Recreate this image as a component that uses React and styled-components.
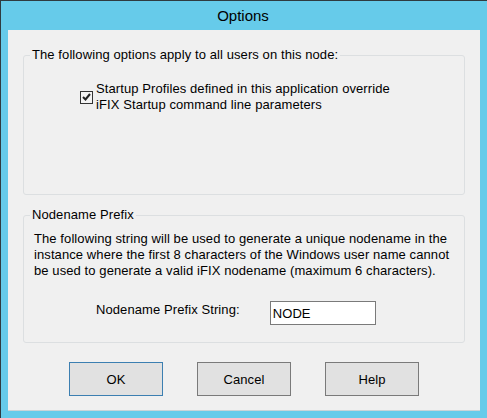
import React from 'react'
import styled, { createGlobalStyle } from 'styled-components'

const GlobalStyle = createGlobalStyle`
  html, body {
    margin: 0;
    padding: 0;
    background: #66cbea;
  }
  body {
    font-family: "Liberation Sans", Arial, sans-serif;
    font-size: 13px;
    letter-spacing: 0.09px;
    color: #000;
  }
`

const Frame = styled.div`
  width: 487px;
  height: 418px;
  box-sizing: border-box;
  background: #66cbea;
  border-left: 1px solid #2f3b40;
  border-top: 1px solid #2f3b40;
  padding: 0 7px 8px 7px;
  display: flex;
  flex-direction: column;
`

const TitleBar = styled.div`
  height: 29px;
  display: flex;
  align-items: center;
  justify-content: center;
  font-size: 15px;
  letter-spacing: 0;
  color: #000;
  padding-right: 2px;
`

const Client = styled.div`
  flex: 1;
  background: #f0f0f0;
  padding: 17px 15px 0 15px;
  display: flex;
  flex-direction: column;
  box-shadow: 0 1px 0 #c9d3d7;
`

const Group = styled.fieldset`
  margin: 0;
  padding: 0;
  min-width: 0;
  border: 1px solid #dcdfe1;
  border-radius: 3px;
  margin-top: ${({ $gap }) => $gap || 0}px;
`

const Legend = styled.legend`
  margin-left: 6px;
  padding: 0 2px;
  line-height: 16px;
`

const GroupBody = styled.div`
  box-sizing: border-box;
  height: ${({ $height }) => $height}px;
  padding: ${({ $pad }) => $pad};
`

const CheckRow = styled.label`
  display: flex;
  align-items: center;
  gap: 3px;
  line-height: 16px;
`

const CheckBox = styled.span`
  width: 13px;
  height: 13px;
  box-sizing: border-box;
  border: 1px solid #333;
  background: #f4f4f4;
  display: flex;
  align-items: center;
  justify-content: center;
  flex: none;
`

const Paragraph = styled.p`
  margin: 0;
  line-height: 16px;
`

const PrefixRow = styled.div`
  display: flex;
  align-items: center;
  margin: 22px 0 0 62px;
  gap: 30px;
`

const PrefixLabel = styled.span`
  line-height: 16px;
  position: relative;
  top: -3px;
`

const TextField = styled.div`
  width: 106px;
  height: 24px;
  box-sizing: border-box;
  border: 1px solid #7a7a7a;
  background: #fff;
  padding: 0 2px;
  display: flex;
  align-items: center;
`

const ButtonBar = styled.div`
  display: flex;
  justify-content: center;
  gap: 34px;
  margin-top: 19px;
`

const Button = styled.button`
  width: 94px;
  height: 34px;
  box-sizing: border-box;
  background: #e1e1e1;
  border: 1px solid ${({ $default }) => ($default ? '#3c7fb1' : '#7a7a7a')};
  font-family: "Liberation Sans", Arial, sans-serif;
  font-size: 13px;
  letter-spacing: 0.09px;
  color: #000;
  padding: 0;
`

const Check = () => (
  <svg width="9" height="8" viewBox="0 0 9 8">
    <path d="M1 4 L3.5 6.5 L8 1" fill="none" stroke="#222" strokeWidth="2" />
  </svg>
)

const App = () => (
  <>
    <GlobalStyle />
    <Frame>
      <TitleBar>Options</TitleBar>
      <Client>
        <Group>
          <Legend>The following options apply to all users on this node:</Legend>
          <GroupBody $height={131} $pad="18px 0 0 56px">
            <CheckRow>
              <CheckBox>
                <Check />
              </CheckBox>
              <span>
                Startup Profiles defined in this application override
                <br />
                iFIX Startup command line parameters
              </span>
            </CheckRow>
          </GroupBody>
        </Group>
        <Group $gap={12}>
          <Legend>Nodename Prefix</Legend>
          <GroupBody $height={119} $pad="8px 0 0 10px">
            <Paragraph>
              The following string will be used to generate a unique nodename in the
              <br />
              instance where the first 8 characters of the Windows user name cannot
              <br />
              be used to generate a valid iFIX nodename (maximum 6 characters).
            </Paragraph>
            <PrefixRow>
              <PrefixLabel>Nodename Prefix String:</PrefixLabel>
              <TextField>NODE</TextField>
            </PrefixRow>
          </GroupBody>
        </Group>
        <ButtonBar>
          <Button $default>OK</Button>
          <Button>Cancel</Button>
          <Button>Help</Button>
        </ButtonBar>
      </Client>
    </Frame>
  </>
)

export default App
